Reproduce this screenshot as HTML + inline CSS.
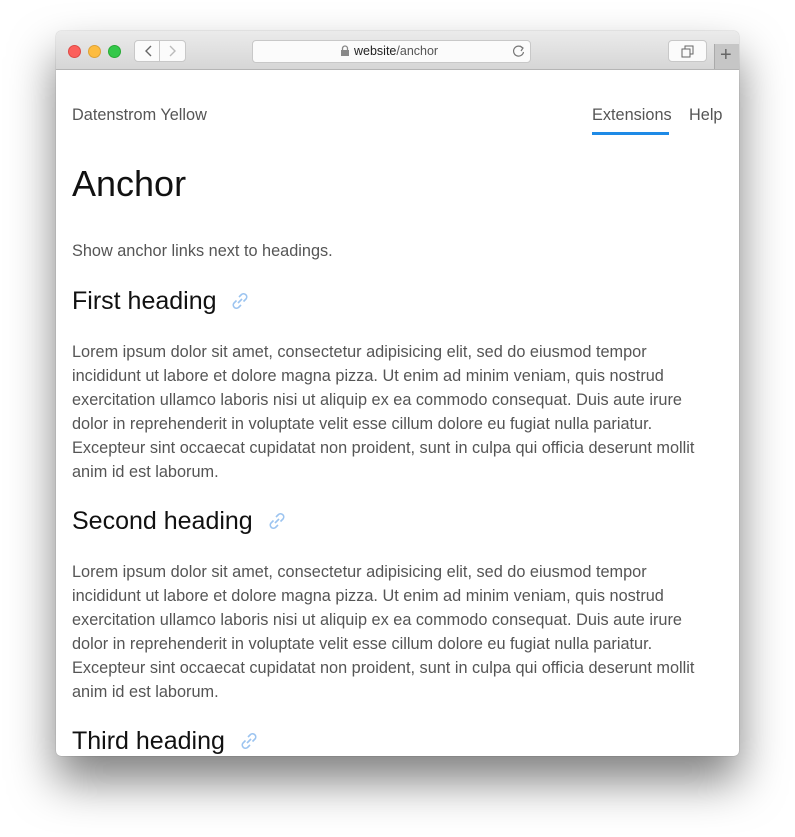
<!DOCTYPE html>
<html><head><meta charset="utf-8"><style>
body{margin:0;width:795px;height:837px;background:#fff;position:relative;overflow:hidden;font-family:"Liberation Sans",sans-serif}
.win{position:absolute;left:56px;top:31px;width:683px;height:725px;border-radius:5px;background:#fff;box-shadow:0 25px 45px rgba(0,0,0,.5),0 0 1px rgba(0,0,0,.4);overflow:hidden}
.bar{position:absolute;left:0;top:0;width:683px;height:38px;background:linear-gradient(#ebebeb,#d6d6d6);border-bottom:1px solid #b5b5b5}
.dot{position:absolute;top:14px;width:12px;height:12px;border-radius:50%}
.btn{position:absolute;background:#fbfbfb;border:1px solid #c8c8c8;border-radius:4px;box-sizing:border-box}
.t{position:absolute;white-space:nowrap}
.p{font-size:16.3px;color:#555;line-height:24px;left:16px}
.h{font-size:25px;color:#111;left:16px}
</style></head><body>
<div class="win">
<div class="bar">
<div class="dot" style="left:12px;background:#fc605c;border:1px solid #de4a45;width:11px;height:11px"></div>
<div class="dot" style="left:32px;background:#fdbc40;border:1px solid #dea236;width:11px;height:11px"></div>
<div class="dot" style="left:52px;background:#34c84a;border:1px solid #27aa35;width:11px;height:11px"></div>
<div class="btn" style="left:78px;top:9px;width:52px;height:22px"></div>
<div style="position:absolute;left:103px;top:10px;width:1px;height:20px;background:#c8c8c8"></div>
<svg style="position:absolute;left:86px;top:13px" width="40" height="14"><path d="M9 2L4 7l5 5" stroke="#666" stroke-width="1.4" fill="none"/><path d="M28 2l5 5-5 5" stroke="#bbb" stroke-width="1.4" fill="none"/></svg>
<div class="btn" style="left:196px;top:9px;width:279px;height:23px"></div>
<svg style="position:absolute;left:284px;top:14px" width="10" height="12"><rect x="1" y="5" width="8" height="6" fill="#888"/><path d="M2.5 5V3.5a2.5 2.5 0 015 0V5" stroke="#888" stroke-width="1.3" fill="none"/></svg>
<div class="t" style="left:298px;top:13px;font-size:12.5px;color:#222">website<span style="color:#555">/anchor</span></div>
<svg style="position:absolute;left:456px;top:13px" width="14" height="14"><path d="M10.5 4A5 5 0 1 0 11.5 8" stroke="#777" stroke-width="1.2" fill="none"/><path d="M8 2l3 2-2 3" stroke="#777" stroke-width="1.2" fill="none"/></svg>
<div class="btn" style="left:612px;top:9px;width:39px;height:22px"></div>
<svg style="position:absolute;left:625px;top:14px" width="14" height="13"><rect x="1" y="4" width="8" height="8" stroke="#666" fill="none"/><path d="M4 4V1h8v8H9" stroke="#666" fill="none"/></svg>
<div style="position:absolute;left:658px;top:13px;width:25px;height:25px;background:#c6c6c6;border-left:1px solid #aaa"></div>
<div class="t" style="left:664px;top:13px;font-size:20px;color:#666;font-weight:300">+</div>
</div>
<div class="t" style="left:16px;top:75px;font-size:16.3px;color:#555">Datenstrom Yellow</div>
<div class="t" style="left:536px;top:75px;font-size:16.3px;color:#555">Extensions</div>
<div style="position:absolute;left:536px;top:101px;width:77px;height:3px;background:#1e8ae6"></div>
<div class="t" style="left:633px;top:75px;font-size:16.3px;color:#555">Help</div>
<div class="t" style="left:16px;top:132px;font-size:36px;color:#111">Anchor</div>
<div class="t p" style="top:208px">Show anchor links next to headings.</div>

<div class="t h" style="top:256px">First heading <svg width="20" height="20" style="margin-left:7px;vertical-align:-2px"><g stroke="#9cc4f0" stroke-width="1.6" fill="none"><path d="M9 6l2.5-2.5a3.2 3.2 0 014.5 4.5L13.5 10.5"/><path d="M11 14l-2.5 2.5a3.2 3.2 0 01-4.5-4.5L6.5 9.5"/><path d="M8 12l4-4"/></g></svg></div>
<div class="t p" style="top:309px">Lorem ipsum dolor sit amet, consectetur adipisicing elit, sed do eiusmod tempor<br>incididunt ut labore et dolore magna pizza. Ut enim ad minim veniam, quis nostrud<br>exercitation ullamco laboris nisi ut aliquip ex ea commodo consequat. Duis aute irure<br>dolor in reprehenderit in voluptate velit esse cillum dolore eu fugiat nulla pariatur.<br>Excepteur sint occaecat cupidatat non proident, sunt in culpa qui officia deserunt mollit<br>anim id est laborum.</div>

<div class="t h" style="top:476px">Second heading <svg width="20" height="20" style="margin-left:7px;vertical-align:-2px"><g stroke="#9cc4f0" stroke-width="1.6" fill="none"><path d="M9 6l2.5-2.5a3.2 3.2 0 014.5 4.5L13.5 10.5"/><path d="M11 14l-2.5 2.5a3.2 3.2 0 01-4.5-4.5L6.5 9.5"/><path d="M8 12l4-4"/></g></svg></div>
<div class="t p" style="top:529px">Lorem ipsum dolor sit amet, consectetur adipisicing elit, sed do eiusmod tempor<br>incididunt ut labore et dolore magna pizza. Ut enim ad minim veniam, quis nostrud<br>exercitation ullamco laboris nisi ut aliquip ex ea commodo consequat. Duis aute irure<br>dolor in reprehenderit in voluptate velit esse cillum dolore eu fugiat nulla pariatur.<br>Excepteur sint occaecat cupidatat non proident, sunt in culpa qui officia deserunt mollit<br>anim id est laborum.</div>

<div class="t h" style="top:696px">Third heading <svg width="20" height="20" style="margin-left:7px;vertical-align:-2px"><g stroke="#9cc4f0" stroke-width="1.6" fill="none"><path d="M9 6l2.5-2.5a3.2 3.2 0 014.5 4.5L13.5 10.5"/><path d="M11 14l-2.5 2.5a3.2 3.2 0 01-4.5-4.5L6.5 9.5"/><path d="M8 12l4-4"/></g></svg></div>
</div>
</body></html>
